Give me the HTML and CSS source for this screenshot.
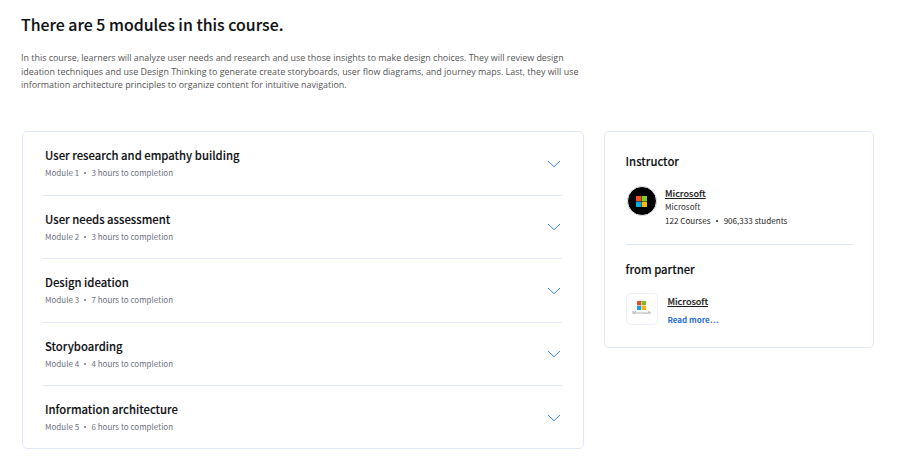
FILE: index.html
```html
<!DOCTYPE html>
<html lang="en">
<head>
    <meta charset="utf-8">
    <title>Course modules</title>
    <link rel="stylesheet" href="styles.css">
</head>
<body>
    <div class="intro">
        <h2><span>There are 5 modules in this course.</span></h2>
        <p>In this course, learners will analyze user needs and research and use those insights to make design choices. They will review design<br>ideation techniques and use Design Thinking to generate create storyboards, user flow diagrams, and journey maps. Last, they will use<br>information architecture principles to organize content for intuitive navigation.</p>
    </div>
    <div class="columns">
        <div class="card modules">
            <div class="module">
                <div>
                    <h3>User research and empathy building</h3>
                    <p class="meta"><span>Module 1</span><i class="dot"></i><span>3 hours to completion</span></p>
                </div>
                <svg class="chevron" viewBox="0 0 14 8"><path d="M1 1l6 5.7L13 1"/></svg>
            </div>
            <div class="module">
                <div>
                    <h3>User needs assessment</h3>
                    <p class="meta"><span>Module 2</span><i class="dot"></i><span>3 hours to completion</span></p>
                </div>
                <svg class="chevron" viewBox="0 0 14 8"><path d="M1 1l6 5.7L13 1"/></svg>
            </div>
            <div class="module">
                <div>
                    <h3>Design ideation</h3>
                    <p class="meta"><span>Module 3</span><i class="dot"></i><span>7 hours to completion</span></p>
                </div>
                <svg class="chevron" viewBox="0 0 14 8"><path d="M1 1l6 5.7L13 1"/></svg>
            </div>
            <div class="module">
                <div>
                    <h3>Storyboarding</h3>
                    <p class="meta"><span>Module 4</span><i class="dot"></i><span>4 hours to completion</span></p>
                </div>
                <svg class="chevron" viewBox="0 0 14 8"><path d="M1 1l6 5.7L13 1"/></svg>
            </div>
            <div class="module">
                <div>
                    <h3>Information architecture</h3>
                    <p class="meta"><span>Module 5</span><i class="dot"></i><span>6 hours to completion</span></p>
                </div>
                <svg class="chevron" viewBox="0 0 14 8"><path d="M1 1l6 5.7L13 1"/></svg>
            </div>
        </div>
        <div class="card side">
            <div class="instructor">
                <h3>Instructor</h3>
                <div class="person">
                    <div class="avatar">
                        <svg class="logo" viewBox="0 0 11 11"><path fill="#f1511b" d="M0 0h5.3v5.3H0z"/><path fill="#80cc28" d="M5.7 0H11v5.3H5.7z"/><path fill="#00adef" d="M0 5.7h5.3V11H0z"/><path fill="#fbbc09" d="M5.7 5.7H11V11H5.7z"/></svg>
                    </div>
                    <div class="info">
                        <a class="name" href="#">Microsoft</a>
                        <p>Microsoft</p>
                        <p class="stats"><span>122 Courses</span><i class="dot"></i><span>906,333 students</span></p>
                    </div>
                </div>
            </div>
            <div class="partner">
                <h3>from partner</h3>
                <div class="person">
                    <div class="badge">
                        <svg class="logo" viewBox="0 0 11 11"><path fill="#e84a25" d="M0 0h5.2v5.2H0z"/><path fill="#7dba1c" d="M5.8 0H11v5.2H5.8z"/><path fill="#1c9fe6" d="M0 5.8h5.2V11H0z"/><path fill="#fbb50c" d="M5.8 5.8H11V11H5.8z"/></svg>
                        <span>Microsoft</span>
                    </div>
                    <div class="info">
                        <a class="name" href="#">Microsoft</a>
                        <a class="more" href="#">Read more…</a>
                    </div>
                </div>
            </div>
        </div>
    </div>
</body>
</html>
```

FILE: styles.css
```css
* { box-sizing: border-box; }
body { margin: 0; padding: 15px 25px 0 21px; height: 476px; overflow: hidden; background: #fff; color: #1f1f1f; font-family: "Noto Sans CJK SC", "Noto Sans", sans-serif; }
h2, h3, p { margin: 0; white-space: nowrap; }
h2 { font-size: 15.86px; line-height: 20px; font-weight: 500; color: #0f1114; -webkit-text-stroke: .12px; }
.intro p { margin-top: 16.4px; font: 9.8px/13.4px "Open Sans", sans-serif; color: #555; transform: scaleX(.91); transform-origin: 0 0; }
.columns { display: flex; align-items: flex-start; gap: 20px; margin: 39.4px 0 0 1px; }
.card { border: 1px solid #e1e9f9; border-radius: 5px; }
.modules { width: 562px; padding: 0 21px 0 20px; height: 318px; }
.module { display: flex; justify-content: space-between; align-items: center; height: 63.5px; padding: .6px 1px 0 2px; border-bottom: 1px solid #e1e9f9; }
.module:last-child { border-bottom: 0; padding-top: 0; }
h3 { font-size: 11.3px; line-height: 16px; font-weight: 500; color: #0f1114; -webkit-text-stroke: .12px; }
.meta { display: flex; align-items: center; margin-top: 3px; font-size: 8px; line-height: 14px; color: #6d7280; }
.dot { width: 2px; height: 2px; margin: 0 5.2px; border-radius: 50%; background: currentColor; }
.chevron { width: 14px; height: 8px; fill: none; stroke: #3f82e0; stroke-width: 1; }
.side { width: 270px; height: 217px; padding: 21px 20px 0 20.6px; }
.instructor { height: 92px; border-bottom: 1px solid #dfe6f7; }
.person { display: flex; }
.instructor .person { margin-top: 17px; gap: 8.4px; }
.avatar { display: flex; align-items: center; justify-content: center; width: 30px; height: 30px; margin-left: 1px; border: 1px solid #e6ebf2; border-radius: 50%; background: #000; }
.logo { width: 11px; height: 11px; display: block; }
.info p { font-size: 8.1px; line-height: 14px; color: #333; }
.info a { display: block; }
.name { font-size: 9.1px; line-height: 14px; font-weight: 500; color: #1f1f1f; text-decoration: underline; -webkit-text-stroke: .15px; }
.info .stats { display: flex; align-items: center; color: #1f1f1f; }
.stats .dot { margin: 0 5.6px; }
.partner { padding-top: 16px; }
.partner .person { margin-top: 16px; gap: 9.8px; }
.partner .name { margin-top: 1px; }
.badge { display: flex; flex-direction: column; align-items: center; width: 32px; height: 32px; padding-top: 7px; border: 1px solid #edf1fa; border-radius: 5px; }
.badge .logo { width: 9px; height: 9px; }
.badge span { font: 4.2px/6px "Open Sans", sans-serif; color: #777; }
.more { margin-top: 5px; font-size: 8px; line-height: 14px; font-weight: 700; color: #2a6fdb; text-decoration: none; }
```
